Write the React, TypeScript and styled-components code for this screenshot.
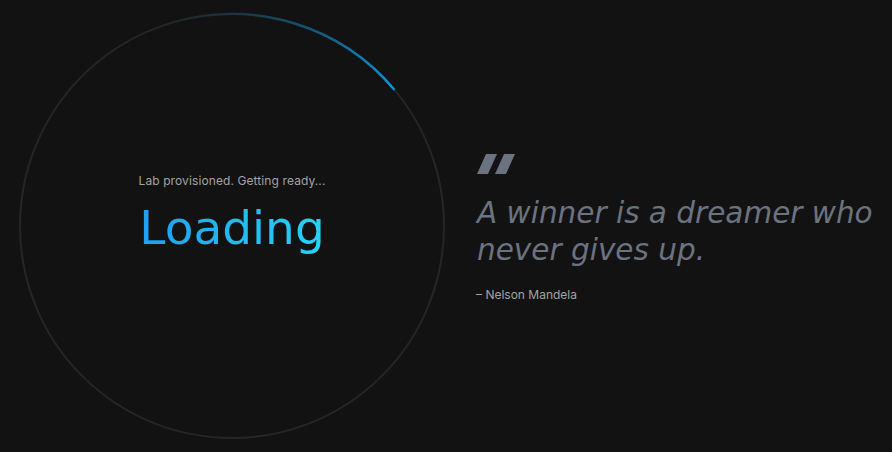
import React from "react";
import styled, { createGlobalStyle } from "styled-components";

const Global = createGlobalStyle`
  html, body { margin: 0; padding: 0; background: #121212; }
  body { width: 892px; height: 452px; overflow: hidden; font-family: Inter, "Liberation Sans", sans-serif; }
`;

const Page = styled.div`
  display: flex;
  align-items: center;
  height: 452px;
  padding-left: 18px;
  box-sizing: border-box;
`;

const Ring = styled.div`
  position: relative;
  flex: none;
  width: 428px;
  height: 428px;
  display: flex;
  flex-direction: column;
  align-items: center;
  justify-content: center;
  padding-bottom: 22px;
  box-sizing: border-box;
`;

const RingSvg = styled.svg`
  position: absolute;
  inset: 0;
`;

const Status = styled.div`
  position: relative;
  font-size: 12px;
  color: #a3a3a3;
  letter-spacing: 0.1px;
`;

const Title = styled.div`
  position: relative;
  font-family: "DejaVu Sans", "Open Sans", sans-serif;
  font-weight: 400;
  font-size: 47px;
  line-height: 60px;
  margin-top: 10px;
  background: linear-gradient(90deg, #1d9ff0, #26d4f7);
  -webkit-background-clip: text;
  background-clip: text;
  color: transparent;
`;

const QuoteBlock = styled.div`
  display: flex;
  flex-direction: column;
  margin-left: 30px;
  margin-top: 4px;
`;

const Marks = styled.svg`
  display: block;
  margin-left: 1px;
`;

const QuoteText = styled.div`
  margin-top: 21px;
  margin-left: 1px;
  font-family: "DejaVu Sans", "Open Sans", sans-serif;
  font-style: italic;
  font-weight: 400;
  font-size: 29.5px;
  line-height: 37px;
  color: #6b7280;
  width: 410px;
`;

const Author = styled.div`
  margin-top: 18px;
  font-size: 12px;
  color: #a3a3a3;
`;

export default function App() {
  const r = 212;
  const cx = 214;
  const pt = (deg: number) => {
    const a = (deg * Math.PI) / 180;
    return [cx + r * Math.sin(a), cx - r * Math.cos(a)];
  };
  const [sx, sy] = pt(-16);
  const [ex, ey] = pt(50);
  return (
    <>
      <Global />
      <Page>
        <Ring>
          <RingSvg width="428" height="428" viewBox="0 0 428 428">
            <defs>
              <linearGradient id="arc" gradientUnits="userSpaceOnUse" x1={sx} y1={sy} x2={ex} y2={ey}>
                <stop offset="0" stopColor="#0a6d9c" stopOpacity="0" />
                <stop offset="0.35" stopColor="#0a6d9c" stopOpacity="0.35" />
                <stop offset="1" stopColor="#0b95d8" />
              </linearGradient>
            </defs>
            <circle cx={cx} cy={cx} r={r} fill="none" stroke="#262626" strokeWidth="2" />
            <path d={`M ${sx} ${sy} A ${r} ${r} 0 0 1 ${ex} ${ey}`} fill="none" stroke="url(#arc)" strokeWidth="2.5" />
          </RingSvg>
          <Status>Lab provisioned. Getting ready...</Status>
          <Title>Loading</Title>
        </Ring>
        <QuoteBlock>
          <Marks width="38" height="20" viewBox="0 0 38 20">
            <polygon points="9,0 20,0 11,20 0,20" fill="#6b7280" />
            <polygon points="27,0 38,0 29,20 18,20" fill="#6b7280" />
          </Marks>
          <QuoteText>A winner is a dreamer who never gives up.</QuoteText>
          <Author>– Nelson Mandela</Author>
        </QuoteBlock>
      </Page>
    </>
  );
}
